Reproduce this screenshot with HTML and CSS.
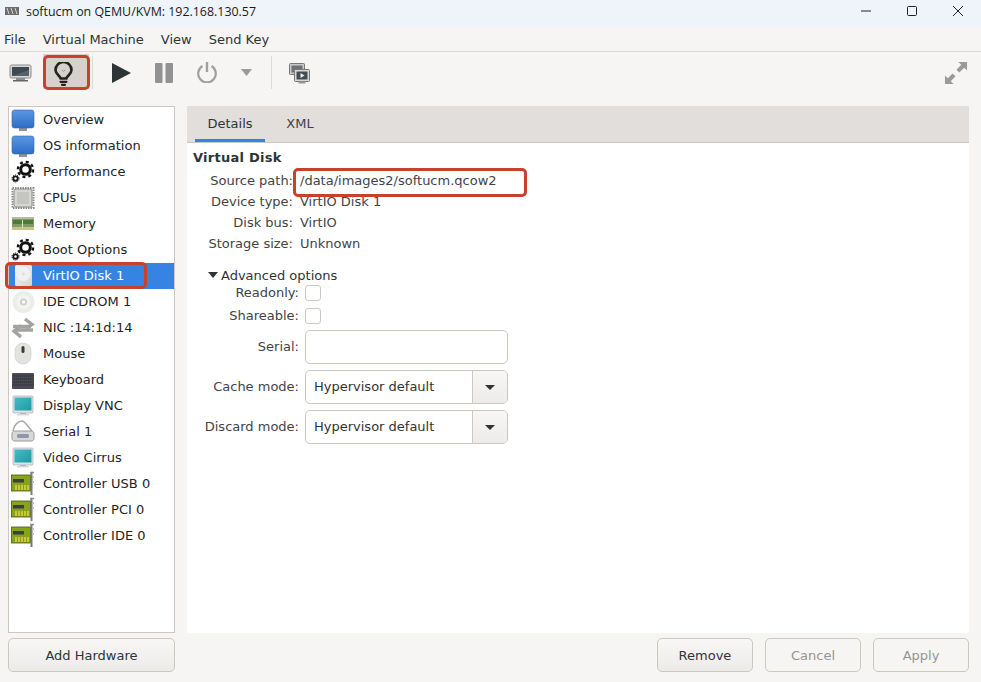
FILE: index.html
```html
<!DOCTYPE html>
<html lang="en">
<head>
<meta charset="utf-8">
<title>softucm on QEMU/KVM</title>
<link rel="stylesheet" href="styles.css">
</head>
<body>
<svg class="defs" width="0" height="0" aria-hidden="true">
  <defs>
    <linearGradient id="blue" x1="0" y1="0" x2="0" y2="1"><stop offset="0" stop-color="#5a97e2"/><stop offset="1" stop-color="#2f6dc6"/></linearGradient>
    <linearGradient id="teal" x1="0" y1="0" x2="1" y2="1"><stop offset="0" stop-color="#45bcc8"/><stop offset="1" stop-color="#1f9aa0"/></linearGradient>
    <linearGradient id="disk" x1="0" y1="0" x2="1" y2="1"><stop offset="0" stop-color="#f4f4f4"/><stop offset="1" stop-color="#d4d4d4"/></linearGradient>
    <symbol id="i-monitor" viewBox="0 0 24 24">
      <rect x="8" y="19" width="8" height="5" fill="#8f9296"/>
      <rect x="1" y="3" width="22" height="18" rx="2.500" fill="url(#blue)" stroke="#3566a8" stroke-width=".6"/>
    </symbol>
    <symbol id="i-gear" viewBox="0 0 24 24">
      <circle cx="14.500" cy="10.500" r="4.800" fill="none" stroke="#111" stroke-width="3"/>
      <circle cx="14.500" cy="10.500" r="7.600" fill="none" stroke="#111" stroke-width="2.400" stroke-dasharray="2.980 2.990"/>
      <circle cx="4.500" cy="19.500" r="2.200" fill="none" stroke="#111" stroke-width="1.800"/>
      <circle cx="4.500" cy="19.500" r="3.500" fill="none" stroke="#111" stroke-width="1" stroke-dasharray="1.300 .9"/>
    </symbol>
    <symbol id="i-cpu" viewBox="0 0 24 24">
      <rect x="1.500" y="3" width="21" height="20" fill="none" stroke="#8a8a88" stroke-width="2" stroke-dasharray="1.500 1"/>
      <rect x="3" y="4" width="18" height="18" rx="2" fill="#d6d6d3" stroke="#8d8d8a"/>
      <rect x="6" y="7" width="12" height="12" rx="1" fill="#c4c4c0"/>
    </symbol>
    <symbol id="i-memory" viewBox="0 0 24 24">
      <rect x="1" y="6" width="22" height="13" fill="#7f9c66"/>
      <rect x="1" y="6" width="22" height="2" fill="#b8b9a8"/>
      <rect x="2" y="9" width="20" height="4" fill="#4d7a3a"/>
      <rect x="1" y="16" width="22" height="3" fill="#c8c38a"/>
      <rect x="11" y="9" width="1" height="8" fill="#dde2cd"/>
    </symbol>
    <symbol id="i-disk" viewBox="0 0 24 24">
      <rect x="4" y="2" width="17" height="21" rx="1.500" fill="url(#disk)"/>
      <circle cx="12.500" cy="11" r="7" fill="#f0f0f0"/>
      <circle cx="12.500" cy="11" r="1.400" fill="#dcdcdc"/>
    </symbol>
    <symbol id="i-cd" viewBox="0 0 24 24">
      <circle cx="12.500" cy="13" r="11" fill="#ececeb"/>
      <circle cx="12.500" cy="13" r="7" fill="#f3f3f2"/>
      <circle cx="12.500" cy="13" r="3.600" fill="#cfcfcd"/>
      <circle cx="12.500" cy="13" r="1.700" fill="#fff"/>
    </symbol>
    <symbol id="i-nic" viewBox="0 0 24 24">
      <path d="M2 11.500H20M14 4l7 5.500-6 4" fill="none" stroke="#a3a3a1" stroke-width="3.400"/>
      <path d="M22 15H5M10 10.500 3 16l7 6" fill="none" stroke="#a3a3a1" stroke-width="3.400"/>
    </symbol>
    <symbol id="i-mouse" viewBox="0 0 24 24">
      <rect x="4" y="2" width="16" height="21" rx="8" fill="#e3e3e1" stroke="#c9c9c7" stroke-width=".6"/>
      <rect x="10.500" y="5" width="3" height="7" rx="1.500" fill="#3c3c3c"/>
    </symbol>
    <symbol id="i-keyboard" viewBox="0 0 24 24">
      <rect x="1" y="6" width="22" height="16" rx="1" fill="#4a4a55"/>
      <path d="M2.500 9h19M2.500 12h19M2.500 15h19M2.500 18h19" stroke="#2c2c34" stroke-width="1.200" stroke-dasharray="1.400 .6"/>
    </symbol>
    <symbol id="i-display" viewBox="0 0 24 24">
      <rect x="9" y="19" width="6" height="3" fill="#bcbcbc"/>
      <rect x="6" y="21" width="12" height="1.500" fill="#d8d8d8"/>
      <rect x="2" y="3" width="20" height="17" rx="1" fill="#dfe3e6" stroke="#9ba5ab" stroke-width=".6"/>
      <rect x="3.500" y="4.500" width="17" height="13" fill="url(#teal)"/>
    </symbol>
    <symbol id="i-serial" viewBox="0 0 24 24">
      <path d="M2 12C3 5 8 2 11 2c3 0 5 5 10 10" fill="none" stroke="#a9a9a7" stroke-width="1.500"/>
      <path d="M1 15c0-2 1-3 3-3h16c2 0 3 1 3 3v4c0 2-1 3-3 3H4c-2 0-3-1-3-3z" fill="#d8d8d6" stroke="#9a9a98"/>
      <rect x="6" y="15" width="12" height="4" rx="1.500" fill="#8f98a8"/>
    </symbol>
    <symbol id="i-card" viewBox="0 0 24 24">
      <rect x="0.500" y="4" width="19" height="16" fill="#86a31c" stroke="#4c5a14" stroke-width=".8"/>
      <rect x="2" y="8" width="11" height="3.500" fill="#3e3e3e"/>
      <path d="M5 19v-5M8 19v-5M11 19v-5M14 19v-5M17 19v-5" stroke="#e6d84a" stroke-width="1.400"/>
      <path d="M20.500 1v23" stroke="#7a7a78" stroke-width="2"/>
      <path d="M19 1.500h4" stroke="#8e8e8c" stroke-width="1.500"/>
      <path d="M22.500 5v2M22.500 10v2" stroke="#bdbdbb" stroke-width="1"/>
    </symbol>
  </defs>
</svg>

<div class="window">
  <header class="titlebar">
    <svg class="app-icon" viewBox="0 0 14 8" width="14" height="8">
      <rect width="14" height="8" fill="#6c6c6c"/>
      <path d="M2 1l2 6M6 1l2 6M10 1l2 6" stroke="#d6d6d6" stroke-width="1"/>
    </svg>
    <span class="title-text">softucm on QEMU/KVM: 192.168.130.57</span>
    <div class="win-controls">
      <svg width="12" height="12" viewBox="0 0 12 12"><path d="M1 6h10" stroke="#222" stroke-width="1"/></svg>
      <svg width="12" height="12" viewBox="0 0 12 12"><rect x="1.500" y="1.500" width="9" height="9" rx="1" fill="none" stroke="#222"/></svg>
      <svg width="12" height="12" viewBox="0 0 12 12"><path d="M1 1l10 10M11 1L1 11" stroke="#222" stroke-width="1"/></svg>
    </div>
  </header>

  <nav class="menubar">
    <span>File</span><span>Virtual Machine</span><span>View</span><span>Send Key</span>
  </nav>

  <div class="toolbar">
    <svg class="tb-monitor" width="23" height="19" viewBox="0 0 23 19">
      <rect x="1" y="1" width="21" height="13" rx="1.500" fill="#d8d8d8" stroke="#8a8a8a"/>
      <rect x="3" y="3" width="17" height="9" fill="#3e4a52"/>
      <path d="M3 12l17-6v6z" fill="#56636b"/>
      <rect x="7" y="14" width="9" height="2" fill="#8f8f8f"/>
      <rect x="4" y="16" width="15" height="1.500" fill="#666"/>
    </svg>
    <div class="tb-active">
      <svg width="19" height="24" viewBox="0 0 19 24">
        <path d="M6.500 16.500c0-2.500-5-4-5-8.500a8 8 0 0 1 16 0c0 4.500-5 6-5 8.500z" fill="none" stroke="#222" stroke-width="2.600" stroke-linejoin="round"/>
        <path d="M6.500 19.800h6M8 22.800h3" stroke="#222" stroke-width="2.200" stroke-linecap="round"/>
        <path d="M8 8l1.500 1.500L11 8" fill="none" stroke="#9a9793" stroke-width="1"/>
      </svg>
    </div>
    <div class="tb-sep"></div>
    <svg class="tb-play" width="19" height="20" viewBox="0 0 19 20"><path d="M0 0l19 10L0 20z" fill="#2e3436"/></svg>
    <svg class="tb-pause" width="18" height="20" viewBox="0 0 18 20"><rect width="7.500" height="20" rx="1" fill="#929292"/><rect x="10.500" width="7.500" height="20" rx="1" fill="#929292"/></svg>
    <svg class="tb-power" width="20" height="22" viewBox="0 0 20 22"><path d="M5.500 5a8.800 8.800 0 1 0 9 0" fill="none" stroke="#a0a0a0" stroke-width="2.200"/><path d="M10 1v10" stroke="#a0a0a0" stroke-width="2.400"/></svg>
    <svg class="tb-caret" width="11" height="7" viewBox="0 0 11 7"><path d="M0 0h11L5.500 7z" fill="#9a9a9a"/></svg>
    <div class="tb-sep tb-sep-2"></div>
    <svg class="tb-console" width="21" height="21" viewBox="0 0 21 21">
      <rect x="0.500" y="0.500" width="15" height="11" rx="1" fill="#c9c9c9" stroke="#777"/>
      <rect x="2.500" y="2.500" width="11" height="7" fill="#6d7479"/>
      <rect x="5.500" y="6.500" width="15" height="12" rx="1" fill="#d8d8d8" stroke="#777"/>
      <rect x="7.500" y="8.500" width="11" height="8" fill="#454c50"/>
      <path d="M11.500 10l4 2.500-4 2.500z" fill="#eee"/>
      <rect x="9.500" y="18.500" width="7" height="2" fill="#999"/>
    </svg>
    <svg class="tb-full" width="24" height="24" viewBox="0 0 25 25">
      <path d="M15 1h9v9l-3-3-5 5-3-3 5-5zM1 15l3 3 5-5 3 3-5 5 3 3H1z" fill="#9a9a9a"/>
    </svg>
  </div>

  <main class="content">
    <div class="side">
      <ul class="devices">
        <li><svg><use href="#i-monitor"/></svg>Overview</li>
        <li><svg><use href="#i-monitor"/></svg>OS information</li>
        <li><svg><use href="#i-gear"/></svg>Performance</li>
        <li><svg><use href="#i-cpu"/></svg>CPUs</li>
        <li><svg><use href="#i-memory"/></svg>Memory</li>
        <li><svg><use href="#i-gear"/></svg>Boot Options</li>
        <li class="selected"><svg><use href="#i-disk"/></svg>VirtIO Disk 1</li>
        <li><svg><use href="#i-cd"/></svg>IDE CDROM 1</li>
        <li><svg><use href="#i-nic"/></svg>NIC :14:1d:14</li>
        <li><svg><use href="#i-mouse"/></svg>Mouse</li>
        <li><svg><use href="#i-keyboard"/></svg>Keyboard</li>
        <li><svg><use href="#i-display"/></svg>Display VNC</li>
        <li><svg><use href="#i-serial"/></svg>Serial 1</li>
        <li><svg><use href="#i-display"/></svg>Video Cirrus</li>
        <li><svg><use href="#i-card"/></svg>Controller USB 0</li>
        <li><svg><use href="#i-card"/></svg>Controller PCI 0</li>
        <li><svg><use href="#i-card"/></svg>Controller IDE 0</li>
      </ul>
      <button class="btn btn-add">Add Hardware</button>
    </div>

    <div class="main-col">
      <section class="panel">
        <div class="tabs">
          <span class="tab tab-on">Details</span>
          <span class="tab">XML</span>
        </div>
        <div class="panel-body">
          <h2 class="heading">Virtual Disk</h2>
          <dl class="info">
            <dt>Source path:</dt><dd>/data/images2/softucm.qcow2</dd>
            <dt>Device type:</dt><dd>VirtIO Disk 1</dd>
            <dt>Disk bus:</dt><dd>VirtIO</dd>
            <dt>Storage size:</dt><dd>Unknown</dd>
          </dl>
          <div class="expander"><span class="exp-arrow"></span>Advanced options</div>
          <div class="adv">
            <label class="adv-label chk-row">Readonly:</label><span class="chk-row"><span class="check"></span></span>
            <label class="adv-label chk-row">Shareable:</label><span class="chk-row"><span class="check"></span></span>
            <label class="adv-label label-entry">Serial:</label><span class="entry"></span>
            <label class="adv-label label-combo">Cache mode:</label>
            <span class="combo"><span class="combo-text">Hypervisor default</span><span class="combo-btn"><i></i></span></span>
            <label class="adv-label label-combo">Discard mode:</label>
            <span class="combo"><span class="combo-text">Hypervisor default</span><span class="combo-btn"><i></i></span></span>
          </div>
        </div>
      </section>
      <div class="actions">
        <button class="btn">Remove</button>
        <button class="btn btn-off">Cancel</button>
        <button class="btn btn-off">Apply</button>
      </div>
    </div>
  </main>

  <div class="mark mark-bulb"></div>
  <div class="mark mark-path"></div>
  <div class="mark mark-disk"></div>
</div>
</body>
</html>
```
FILE: styles.css
```css
* { box-sizing: border-box; }
html, body { margin: 0; padding: 0; }
body {
  width: 981px;
  height: 682px;
  overflow: hidden;
  font-family: "DejaVu Sans", sans-serif;
  font-size: 13px;
  color: #2e3436;
  background: #f6f5f4;
}
.defs { position: absolute; }
.window {
  position: relative;
  width: 981px;
  height: 682px;
  display: flex;
  flex-direction: column;
}

/* title bar */
.titlebar {
  height: 27px;
  flex: none;
  display: flex;
  align-items: center;
  padding: 0 0 5px 5px;
  background: #eff4fa;
  color: #1a1a1a;
  font-family: "Open Sans", sans-serif;
  font-size: 12.4px;
}
.app-icon { margin-right: 7px; }
.title-text { flex: 1; }
.win-controls {
  display: flex;
  gap: 34px;
  padding-right: 17px;
  align-items: center;
}

/* menu */
.menubar {
  height: 25px;
  flex: none;
  display: flex;
  align-items: center;
  gap: 17px;
  padding: 1px 4px 0;
  border-bottom: 1px solid #dcd9d6;
}

/* toolbar */
.toolbar {
  height: 54px;
  flex: none;
  display: flex;
  align-items: flex-start;
}
.toolbar svg { flex: none; }
.tb-monitor { margin: 12px 0 0 9px; }
.tb-active {
  width: 46px;
  height: 35px;
  margin: 2px 0 0 11px;
  padding: 8px 0 0 11px;
  background: #d5d2ce;
}
.tb-active svg { display: block; }
.tb-sep {
  width: 1px;
  height: 33px;
  margin: 4px 0 0 3px;
  background: #dcd9d6;
}
.tb-play { margin: 11px 0 0 19px; }
.tb-pause { margin: 11px 0 0 24px; }
.tb-power { margin: 9px 0 0 24px; }
.tb-caret { margin: 17px 0 0 24px; }
.tb-sep-2 { margin-left: 19px; }
.tb-console { margin: 11px 0 0 17px; }
.tb-full { margin: 9px 13px 0 auto; }

/* main */
.content {
  flex: 1;
  min-height: 0;
  display: flex;
  gap: 12px;
  padding: 0 12px 10px 8px;
}
.side {
  width: 167px;
  flex: none;
  display: flex;
  flex-direction: column;
}
.devices {
  flex: 1;
  margin: 0;
  padding: 0;
  list-style: none;
  background: #fff;
  border: 1px solid #cdc7c2;
}
.devices li {
  height: 26px;
  display: flex;
  align-items: center;
  gap: 8px;
  padding: 0 0 2px 2px;
  color: #1e2324;
}
.devices svg {
  width: 24px;
  height: 24px;
  flex: none;
}
.devices .selected {
  background: #3584e4;
  color: #fff;
}

.main-col {
  flex: 1;
  min-width: 0;
  display: flex;
  flex-direction: column;
}
.panel {
  flex: 1;
  background: #fff;
  display: flex;
  flex-direction: column;
}
.tabs {
  height: 37px;
  flex: none;
  display: flex;
  padding-left: 8px;
  background: #e1dedb;
  border-bottom: 1px solid #cdc7c2;
}
.tab {
  width: 70px;
  height: 36px;
  padding-top: 10px;
  text-align: center;
  color: #3f4446;
}
.tab-on {
  color: #2e3436;
  border-bottom: 3px solid #3584e4;
}
.panel-body { padding: 7px 6px 0; }
.heading {
  margin: 0 0 4px;
  font-size: 13px;
  font-weight: 700;
  line-height: 16px;
  letter-spacing: .25px;
}
.info {
  margin: 0;
  display: grid;
  grid-template-columns: 100px 1fr;
  column-gap: 7px;
  grid-auto-rows: 21px;
  line-height: 21px;
}
.info dt { text-align: right; color: #3f4446; }
.info dd { margin: 0; color: #3f4446; }
.expander {
  margin: 14px 0 -1px 15px;
  display: flex;
  align-items: center;
  height: 14px;
}
.exp-arrow {
  width: 0;
  height: 0;
  margin-right: 3px;
  border-left: 5.500px solid transparent;
  border-right: 5.500px solid transparent;
  border-top: 6px solid #2e3436;
}
.adv {
  display: grid;
  grid-template-columns: 106px 203px;
  column-gap: 6px;
  align-items: center;
}
.adv-label { text-align: right; color: #3f4446; }
.label-entry { padding-top: 2px; }
.label-combo { padding-top: 5px; }
.chk-row { height: 23px; display: flex; align-items: center; justify-content: flex-end; }
span.chk-row { justify-content: flex-start; }
.check {
  width: 16px;
  height: 16px;
  background: #fff;
  border: 1px solid #cdc7c2;
  border-radius: 3px;
}
.entry {
  height: 34px;
  margin-top: 3px;
  background: #fff;
  border: 1px solid #cdc7c2;
  border-radius: 5px;
}
.entry, .combo { display: flex; }
.combo {
  height: 34px;
  margin-top: 6px;
  border: 1px solid #cdc7c2;
  border-radius: 5px;
  overflow: hidden;
  align-items: stretch;
}
.combo-text {
  flex: 1;
  padding-left: 8px;
  line-height: 31px;
  color: #2e3436;
}
.combo-btn {
  width: 35px;
  flex: none;
  display: flex;
  align-items: center;
  justify-content: center;
  background: linear-gradient(#f8f7f6, #ecebe9);
  border-left: 1px solid #cdc7c2;
}
.combo-btn i {
  width: 0;
  height: 0;
  border-left: 5px solid transparent;
  border-right: 5px solid transparent;
  border-top: 5px solid #2e3436;
}

/* buttons */
.btn {
  height: 34px;
  padding: 0;
  font: inherit;
  color: #2e3436;
  background: linear-gradient(#f8f7f6, #ecebe9);
  border: 1px solid #cdc7c2;
  border-radius: 5px;
}
.btn-add { flex: none; margin-top: 5px; width: 167px; }
.actions {
  flex: none;
  display: flex;
  justify-content: flex-end;
  gap: 12px;
  margin-top: 5px;
}
.actions .btn { width: 96px; }
.btn-off {
  color: #929595;
  background: #f6f5f4;
}

/* annotations over the UI */
.mark {
  position: absolute;
  border: 3px solid #c9412d;
  border-radius: 5px;
}
.mark-bulb { left: 43px; top: 55px; width: 47px; height: 35px; }
.mark-path { left: 293px; top: 168px; width: 234px; height: 29px; }
.mark-disk { left: 5px; top: 262px; width: 142px; height: 27px; }
```
